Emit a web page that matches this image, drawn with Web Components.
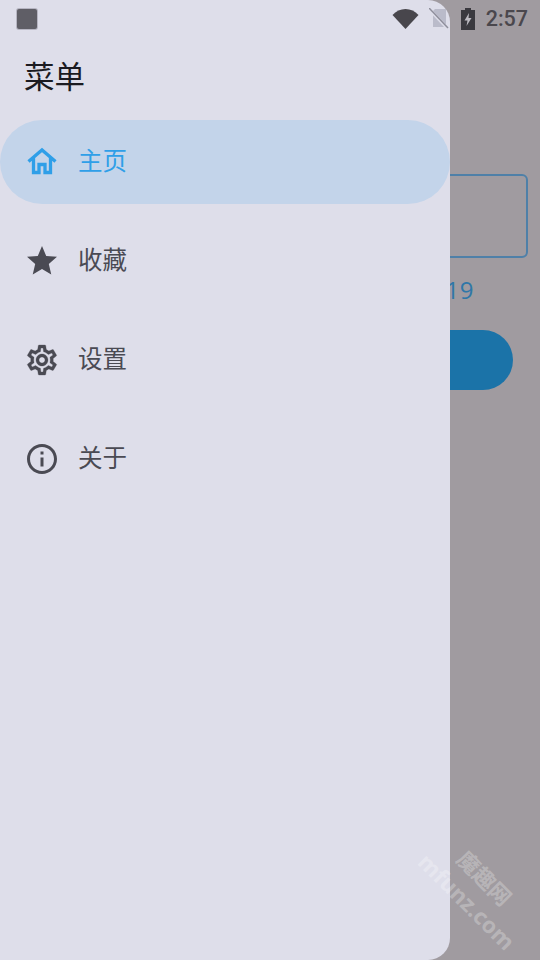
<!DOCTYPE html>
<html><head><meta charset="utf-8">
<style>html,body{margin:0;padding:0;width:540px;height:960px;overflow:hidden;background:#a09ba0}</style>
</head><body>
<template id="t-app"><style>
:host{display:block;position:relative;width:540px;height:960px;overflow:hidden;background:#a09ba0;font-family:"Noto Sans","Noto Sans CJK SC",sans-serif}
.back{display:flex;flex-direction:column;align-items:stretch;padding:174px 12px 0 12px;height:786px}
.field{height:80px;border:2px solid #4f80a8;border-radius:6px}
.count{margin-top:15px;height:34px;padding-right:54px;text-align:right;font:24px/34px "Open Sans",sans-serif;letter-spacing:.5px;color:#2f77a8}
.btn{margin:23px 15px 0 15px;height:60px;border-radius:30px;background:#1b73a8}
</style>
<div class="back"><div class="field"></div><div class="count">2019</div><div class="btn"></div></div>
<slot></slot></template>

<template id="t-drawer"><style>
:host{position:absolute;left:0;top:0;width:450px;height:960px;background:#dedeea;border-radius:0 22px 22px 0;box-sizing:border-box;padding-top:35px;display:block}
h1{margin:0;height:85px;padding-left:24px;font:400 30.500px/80px "Noto Sans CJK SC",sans-serif;color:#1b1b21}
nav{display:flex;flex-direction:column;gap:15px}
</style><h1>菜单</h1><nav><slot></slot></nav></template>

<template id="t-item"><style>
:host{display:flex;align-items:center;gap:18px;height:84px;padding-left:24px;border-radius:42px;color:#4a4a53;font:400 24.500px/1 "Noto Sans CJK SC",sans-serif}
:host([active]){background:#c3d4ea;color:#2f9fe8}
.i{width:36px;height:36px;display:flex}
.l{margin-top:-4px}
::slotted(svg){width:36px;height:36px;fill:currentColor}
</style><span class="i"><slot name="icon"></slot></span><span class="l"><slot></slot></span></template>

<template id="t-status"><style>
:host{position:absolute;left:0;top:0;width:540px;height:37px;display:flex;align-items:center;box-sizing:border-box;padding:0 12px 0 17px;color:#48464c}
.sq{width:20px;height:20px;border-radius:2px;background:#5f5e66;box-shadow:0 0 0 1px #b6b5c2}
.sp{flex:1}
.w{width:27px;height:20px;margin-right:10px}
.s{width:20px;height:22px;margin-right:12px}
.b{width:14px;height:22px;margin-right:11px}
.t{font:500 21.500px/1 Roboto,sans-serif;color:#4a474d}
</style>
<div class="sq"></div><div class="sp"></div>
<svg class="w" viewBox="0 0 26 20"><path d="M0 6C3.500 2.200 8 0 13 0s9.500 2.200 13 6L13 20Z" fill="#48464c"/></svg>
<svg class="s" viewBox="0 0 20 22"><path d="M4 1h13v18H4Z" fill="#babbca"/><path d="M0 0 7 0 0 7Z" fill="#dedeea"/><path d="M0 1 19 21" stroke="#dedeea" stroke-width="3"/><path d="M0 0 19 20" stroke="#8e8e9b" stroke-width="1.500"/></svg>
<svg class="b" viewBox="0 0 14 22"><path d="M4 0h6v2h4v20H0V2h4Z" fill="#3a393f"/><path d="M8 5 3.500 12.500h3L5.500 18l5-8H7.500Z" fill="#bdbbc2"/></svg>
<span class="t">2:57</span></template>

<template id="t-mark"><style>
:host{position:absolute;left:0;top:0;width:540px;height:960px;pointer-events:none;display:block}
span{position:absolute;color:rgba(255,255,255,.27);white-space:nowrap;transform:rotate(45deg);transform-origin:0 0;line-height:1}
.a{left:430px;top:850px;font:700 22.500px/1 "Noto Sans",sans-serif}
.b{left:470px;top:846px;font:700 22px/1 "Noto Sans CJK SC",sans-serif}
</style><span class="a">mfunz.com</span><span class="b">魔趣网</span></template>

<script>
function def(n,t){customElements.define(n,class extends HTMLElement{constructor(){super();this.attachShadow({mode:"open"}).appendChild(document.getElementById(t).content.cloneNode(true));}});}
def("x-app","t-app");def("x-drawer","t-drawer");def("x-item","t-item");def("x-status","t-status");def("x-mark","t-mark");
</script>
<x-app>
<x-drawer>
<x-item active><svg slot="icon" viewBox="0 0 36 36"><path d="M4.500 17.500 18 6l13.500 11.500M9.500 14V28.500H15V20.500H21V28.500H26.500V14" fill="none" stroke="currentColor" stroke-width="3.300"/></svg>主页</x-item>
<x-item><svg slot="icon" viewBox="0 0 24 24"><path d="M12 17.270 18.180 21l-1.640-7.030L22 9.240l-7.190-.61L12 2 9.190 8.630 2 9.240l5.460 4.730L5.820 21Z"/></svg>收藏</x-item>
<x-item><svg slot="icon" viewBox="0 0 24 24"><path stroke="currentColor" stroke-width=".2" d="M19.430 12.980c.04-.32.07-.64.07-.98s-.03-.66-.07-.98l2.110-1.650c.19-.15.24-.42.12-.64l-2-3.460c-.12-.22-.39-.3-.61-.22l-2.490 1c-.52-.4-1.080-.73-1.690-.98l-.38-2.650C14.460 2.180 14.250 2 14 2h-4c-.25 0-.46.180-.49.420l-.38 2.650c-.61.250-1.170.59-1.690.98l-2.490-1c-.23-.09-.49 0-.61.220l-2 3.460c-.13.220-.07.490.12.640l2.110 1.650c-.04.320-.07.650-.07.980s.03.660.07.980l-2.110 1.650c-.19.150-.24.420-.12.640l2 3.460c.12.220.39.300.61.220l2.490-1c.52.400 1.080.730 1.690.980l.38 2.650c.03.240.24.420.49.420h4c.25 0 .46-.18.49-.42l.38-2.650c.61-.25 1.170-.59 1.690-.98l2.490 1c.23.090.49 0 .61-.22l2-3.460c.12-.22.070-.49-.12-.64zM17.450 11.270c.04.310.05.520.05.730s-.02.430-.05.730l-.14 1.130.89.700 1.080.84-.7 1.210-1.270-.51-1.040-.42-.9.680c-.43.320-.84.560-1.250.73l-1.060.43-.16 1.130-.2 1.350h-1.400l-.19-1.350-.16-1.130-1.060-.43c-.43-.18-.83-.41-1.230-.71l-.91-.7-1.060.43-1.270.51-.7-1.210 1.080-.84.890-.7-.14-1.130c-.03-.31-.05-.54-.05-.74s.02-.43.05-.73l.14-1.130-.89-.7-1.080-.84.7-1.210 1.270.51 1.040.42.9-.68c.43-.32.84-.56 1.250-.73l1.060-.43.16-1.130.2-1.350h1.390l.19 1.350.16 1.130 1.060.43c.43.180.83.410 1.230.710l.91.700 1.060-.43 1.270-.51.7 1.210-1.070.85-.89.700zM12 8c-2.210 0-4 1.790-4 4s1.790 4 4 4 4-1.790 4-4-1.790-4-4-4zm0 6c-1.100 0-2-.9-2-2s.9-2 2-2 2 .9 2 2-.9 2-2 2z"/></svg>设置</x-item>
<x-item><svg slot="icon" viewBox="0 0 24 24"><path d="M11 7h2v2h-2zm0 4h2v6h-2zm1-9C6.480 2 2 6.480 2 12s4.480 10 10 10 10-4.480 10-10S17.520 2 12 2zm0 18c-4.410 0-8-3.590-8-8s3.590-8 8-8 8 3.590 8 8-3.590 8-8 8z"/></svg>关于</x-item>
</x-drawer>
<x-status></x-status>
<x-mark></x-mark>
</x-app>
</body></html>
